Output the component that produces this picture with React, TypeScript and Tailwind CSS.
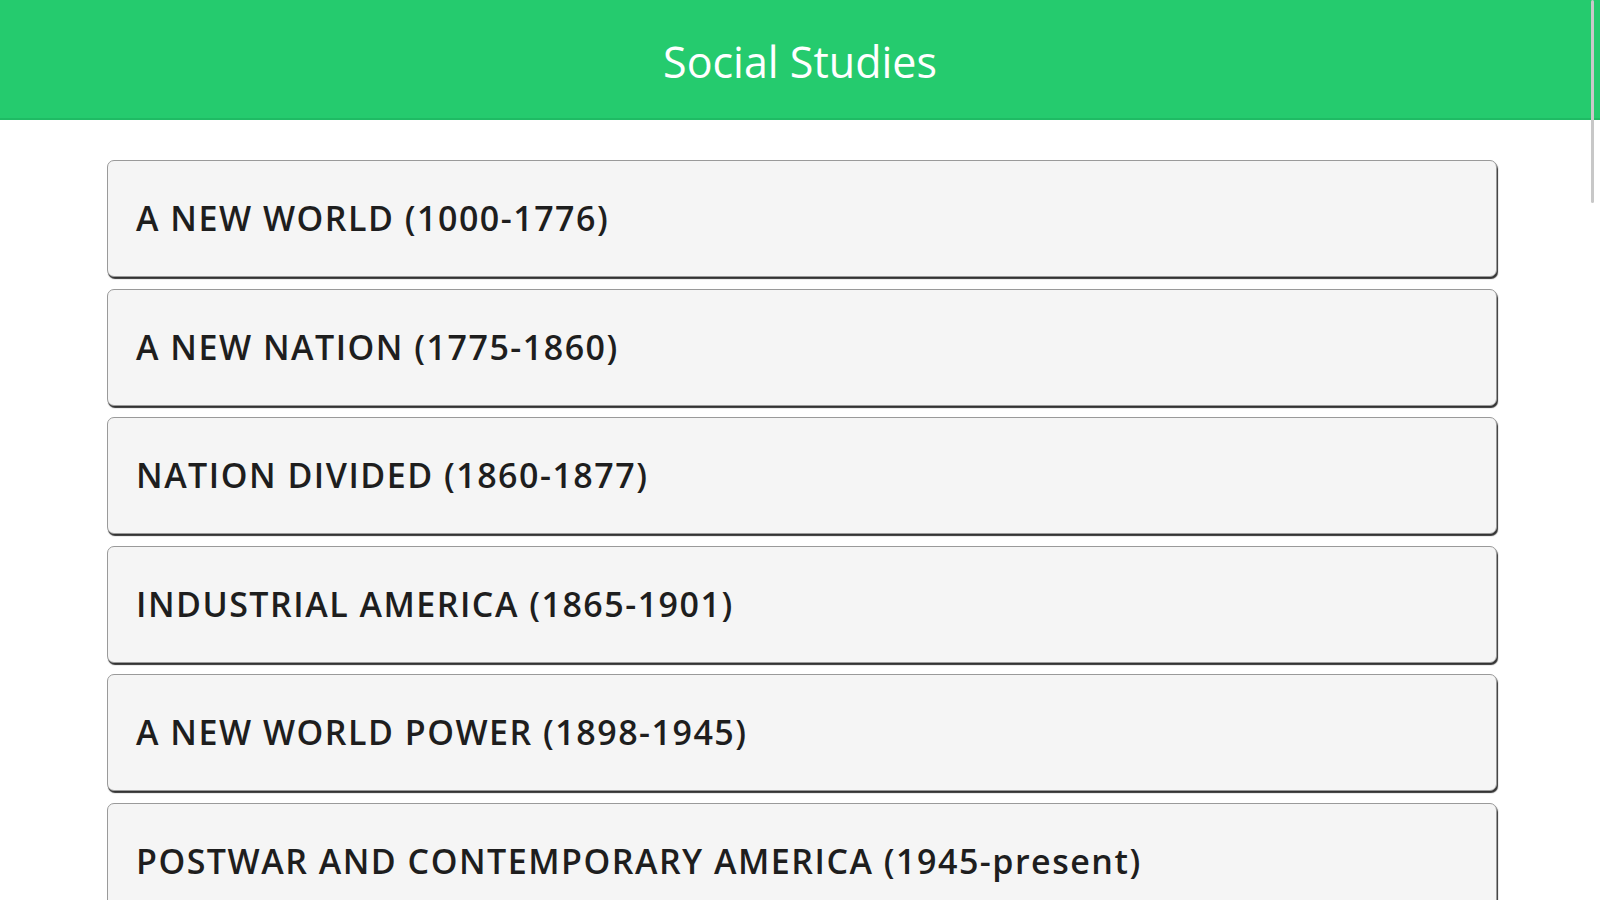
const eras = [
	'A NEW WORLD (1000-1776)',
	'A NEW NATION (1775-1860)',
	'NATION DIVIDED (1860-1877)',
	'INDUSTRIAL AMERICA (1865-1901)',
	'A NEW WORLD POWER (1898-1945)',
	'POSTWAR AND CONTEMPORARY AMERICA (1945-present)'
];

export default function App() {
	return (
		<div className="relative h-screen overflow-hidden bg-white">
			<header className="flex h-[120px] items-center justify-center border-b-2 border-[#1fbb64] bg-[#25cb6e] pt-[4px]">
				<h1 className="font-['Open_Sans',sans-serif] text-[43px] leading-none text-white">
					Social Studies
				</h1>
			</header>
			<div className="mt-[40px] ml-[107px] flex w-[1390px] flex-col gap-[11.5px]">
				{eras.map((era) => (
					<button
						key={era}
						type="button"
						className="flex h-[117px] shrink-0 items-center rounded-[7px] border border-[#9a9a9a] bg-[#f5f5f5] pl-[28px] text-left shadow-[1px_2px_1px_#333]"
					>
						<span className="font-['Open_Sans',sans-serif] text-[34px] font-semibold tracking-[1.5px] text-[#1e1e1e]">
							{era}
						</span>
					</button>
				))}
			</div>
			<div className="absolute top-0 right-[6px] h-[203px] w-[3px] rounded-full bg-[#c8c8c8]" />
		</div>
	);
}
